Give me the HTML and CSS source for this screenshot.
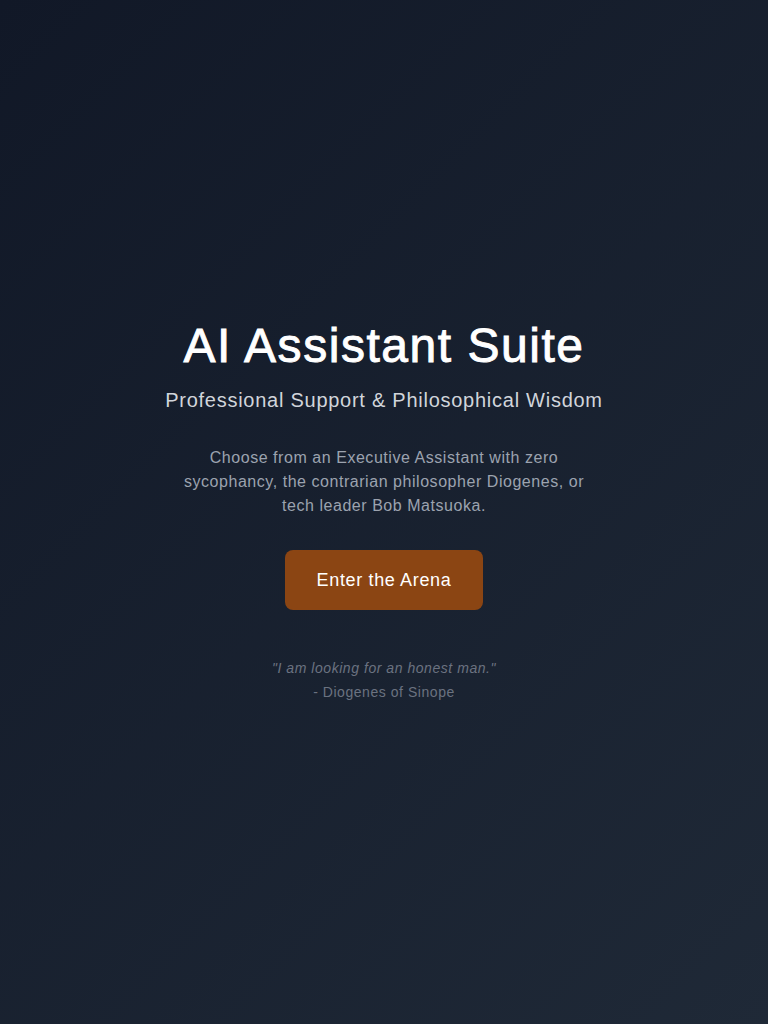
FILE: index.html
```html
<!DOCTYPE html>
<html lang="en">
<head>
<meta charset="utf-8">
<title>AI Assistant Suite</title>
<link rel="stylesheet" href="styles.css">
</head>
<body>
<main class="hero">
  <div class="hero-inner">
    <h1 class="title">AI Assistant Suite</h1>
    <p class="subtitle">Professional Support &amp; Philosophical Wisdom</p>
    <p class="lead">Choose from an Executive Assistant with zero sycophancy, the contrarian philosopher Diogenes, or tech leader Bob Matsuoka.</p>
    <button class="cta" type="button">Enter the Arena</button>
    <div class="quote">
      <p class="quote-text">"I am looking for an honest man."</p>
      <p class="quote-author">- Diogenes of Sinope</p>
    </div>
  </div>
</main>
</body>
</html>
```
FILE: styles.css
```css
* { box-sizing: border-box; }
html, body { margin: 0; padding: 0; }
body {
  font-family: "Liberation Sans", Arial, Helvetica, sans-serif;
  background: linear-gradient(135deg, #111827 0%, #1f2937 100%);
  min-height: 100vh;
  color: #fff;
  letter-spacing: 0.034em;
}
.hero {
  min-height: 100vh;
  display: flex;
  align-items: center;
  justify-content: center;
  padding: 0 16px;
}
.hero-inner {
  display: flex;
  flex-direction: column;
  align-items: center;
  text-align: center;
}
.title {
  margin: 0 0 16px;
  font-size: 48px;
  line-height: 48px;
  font-weight: 400;
  letter-spacing: 0.032em;
  -webkit-text-stroke: 0.9px #fff;
  color: #fff;
}
.subtitle {
  margin: 0 0 32px;
  font-size: 20px;
  line-height: 28px;
  letter-spacing: 0.037em;
  color: #d1d5db;
}
.lead {
  margin: 0 0 32px;
  max-width: 424px;
  font-size: 16px;
  line-height: 24px;
  color: #9ca3af;
}
.cta {
  font-family: inherit;
  font-size: 18px;
  line-height: 28px;
  letter-spacing: 0.036em;
  color: #fff;
  background: #8b4513;
  border: none;
  border-radius: 8px;
  padding: 16px 32px;
  cursor: pointer;
}
.quote {
  margin-top: 48px;
  display: flex;
  flex-direction: column;
  gap: 4px;
}
.quote-text {
  margin: 0;
  font-size: 14px;
  line-height: 20px;
  font-style: italic;
  color: #6b7280;
}
.quote-author {
  margin: 0;
  font-size: 14px;
  line-height: 20px;
  color: #6b7280;
}
```
